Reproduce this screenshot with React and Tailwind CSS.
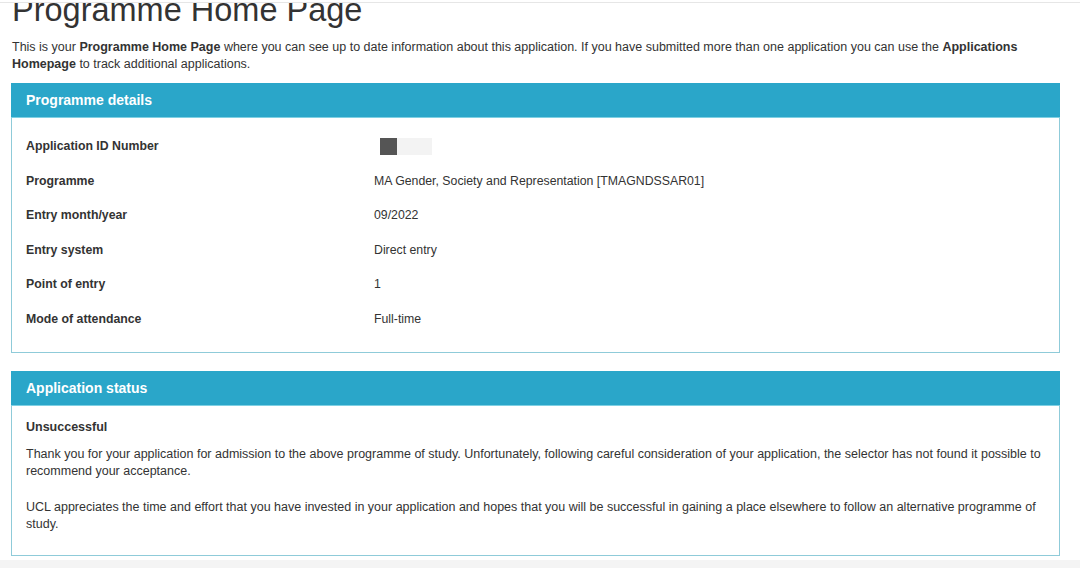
import React from "react";

const rows = [
  ["Application ID Number", null],
  ["Programme", "MA Gender, Society and Representation [TMAGNDSSAR01]"],
  ["Entry month/year", "09/2022"],
  ["Entry system", "Direct entry"],
  ["Point of entry", "1"],
  ["Mode of attendance", "Full-time"],
];

export default function App() {
  return (
    <div
      className="w-[1080px] h-[568px] overflow-hidden bg-white text-[#333333] relative"
      style={{ fontFamily: '"Liberation Sans", Arial, sans-serif' }}
    >
      <div className="h-[3px] border-b border-[#e6e6e6] bg-white relative z-10" />
      <div className="pl-[12px] pr-[20px]">
        <h1 className="text-[32.5px] leading-[36px] mt-[-11px] text-[#333] font-normal">
          Programme Home Page
        </h1>
        <p className="text-[12.5px] leading-[17px] mt-[11px]">
          This is your <b>Programme Home Page</b> where you can see up to date information about this
          application. If you have submitted more than one application you can use the{" "}
          <b>Applications Homepage</b> to track additional applications.
        </p>
      </div>

      <div className="ml-[11px] w-[1049px] mt-[10px] border border-[#8fcbd9]">
        <div className="h-[35px] bg-[#2aa6c9] -mx-px -mt-px flex items-center px-[15px] border-b border-[#7fd0e3]">
          <span className="text-white font-bold text-[14px]">Programme details</span>
        </div>
        <div className="pt-[11px] pb-[16px]">
          {rows.map(([label, value]) => (
            <div key={label} className="flex items-center h-[34.5px] text-[12.3px]">
              <div className="w-[362px] pl-[14px] font-bold">{label}</div>
              {value === null ? (
                <div className="flex items-center ml-[6px]">
                  <div className="w-[17px] h-[17px] bg-[#555555]" />
                  <div className="w-[35px] h-[17px] bg-[#f3f3f3]" />
                </div>
              ) : (
                <div>{value}</div>
              )}
            </div>
          ))}
        </div>
      </div>

      <div className="ml-[11px] w-[1049px] mt-[18px] border border-[#8fcbd9]">
        <div className="h-[35px] bg-[#2aa6c9] -mx-px -mt-px flex items-center px-[15px] border-b border-[#7fd0e3]">
          <span className="text-white font-bold text-[14px]">Application status</span>
        </div>
        <div className="pl-[14px] pr-[10px] pt-[13px] pb-[22px] text-[12.5px] leading-[17px]">
          <p className="font-bold">Unsuccessful</p>
          <p className="mt-[10px]">
            Thank you for your application for admission to the above programme of study. Unfortunately,
            following careful consideration of your application, the selector has not found it possible to
            recommend your acceptance.
          </p>
          <p className="mt-[19px]">
            UCL appreciates the time and effort that you have invested in your application and hopes that
            you will be successful in gaining a place elsewhere to follow an alternative programme of study.
          </p>
        </div>
      </div>
      <div className="absolute left-0 right-0 bottom-0 h-[8px] bg-[#f4f4f4]" />
    </div>
  );
}
